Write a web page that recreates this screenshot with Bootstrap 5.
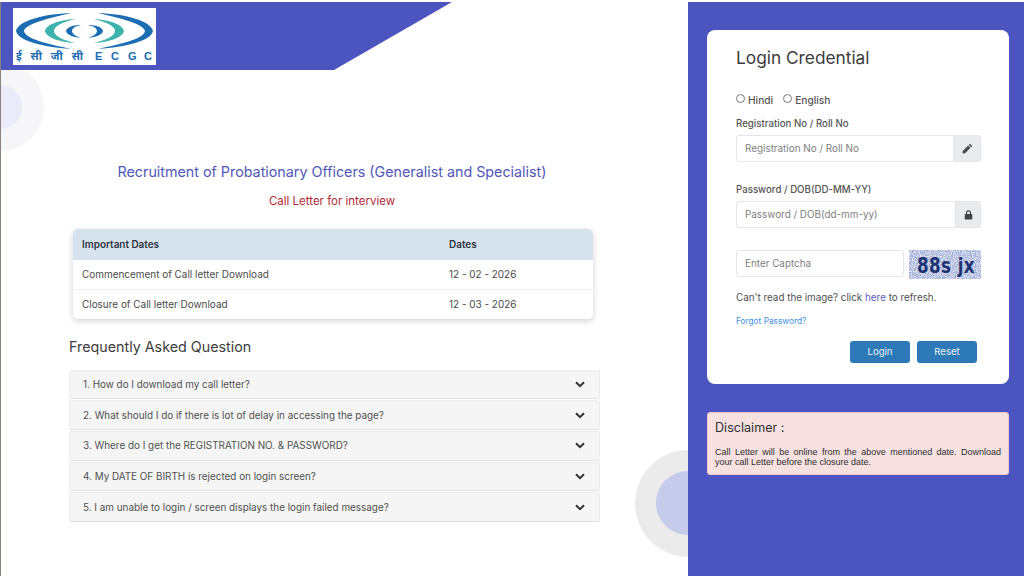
<!DOCTYPE html>
<html lang="en">
<head>
<meta charset="utf-8">
<title>Call Letter Login</title>
<link href="https://cdn.jsdelivr.net/npm/bootstrap@5.3.0/dist/css/bootstrap.min.css" rel="stylesheet">
<style>
html,body{height:100%;}
body{font-family:"Inter","Liberation Sans",sans-serif;color:#444;background:#fff;overflow:hidden;}
.shell{height:576px;padding-top:2px;}
.left-pane{width:688px;flex:none;position:relative;overflow:hidden;border-left:1px solid #8f827c;}
.right-pane{flex:1;background:#4c55bf;padding:28px 15px 0 19px;position:relative;}
.banner{position:relative;z-index:1;width:451px;height:68px;background:#4c55bf;clip-path:polygon(0 0,100% 0,333px 100%,0 100%);padding:6px 0 0 12px;}
.logo-box{width:143px;height:57px;background:#fff;display:block;}
.ring{position:absolute;border-radius:50%;}
.ring-a{width:88px;height:88px;left:-45px;top:61px;background:#f6f6f9;}
.ring-b{width:44px;height:44px;left:-23px;top:83px;background:#e9ebf8;}
.ring-c{width:107px;height:107px;left:634px;top:448px;background:#ebebeb;}
.ring-d{width:64px;height:64px;left:655px;top:469px;background:#c6cbeb;}
.main-col{position:relative;z-index:1;padding:93px 87px 0 68px;}
.page-title{font-size:14.3px;font-weight:400;color:#5058bb;text-align:center;line-height:18px;margin:0 6px 0 0;}
.page-sub{font-size:11.5px;color:#b02a37;text-align:center;line-height:14px;margin:13px 6px 0 0;}
.dates-wrap{margin:21px 8px 0 4px;border-radius:5px;overflow:hidden;box-shadow:0 2px 6px rgba(0,0,0,.18);background:#fff;}
.dates-table{margin:0;font-size:9.95px;--bs-table-color:#4a4a4a;}
.dates-table th{background:#d6e3ee;color:#2f3540;font-weight:600;height:31px;padding:0 9px;vertical-align:middle;border:0;}
.dates-table td{height:29.5px;padding:0 9px;vertical-align:middle;border-color:#efefef;}
.dates-table tr:last-child td{border-bottom:0;}
.col-date{width:153px;}
.faq-title{font-size:14.3px;font-weight:400;color:#3d3d3d;line-height:18px;margin:18.5px 0 14px;}
.faq-list{margin-right:1px;background:none;}
.faq-item{background:#f5f5f5;border:1px solid #ececec;border-bottom-color:#e0e0e0;border-radius:2px;margin-bottom:1px;}
.faq-btn{display:flex;align-items:center;justify-content:space-between;width:100%;height:27.7px;padding:0 14px 0 13px;font-size:9.88px;color:#505050;background:none;border:0;text-align:left;}
.login-card{border:0;border-radius:8px;height:354px;background:#fff;padding:18px 28px 0 29px;}
.login-title{font-size:17.3px;font-weight:400;color:#3c3c3c;line-height:20px;margin:0;}
.lang-row{display:flex;gap:10px;font-size:10.2px;font-weight:500;color:#555;margin-top:25.5px;line-height:13px;}
.lang-row label{display:flex;align-items:center;gap:3px;}
.lang-row input{width:9px;height:9px;margin:0 0 3px;border:1px solid #777;background:#fff;appearance:none;border-radius:50%;}
.field-label{display:block;font-size:9.7px;font-weight:500;color:#555;line-height:12px;margin:11.5px 0 5px;}
.field-group{height:27px;flex-wrap:nowrap;}
.field-group .form-control{font-size:9.9px;padding:0 8px 1.5px;height:27px;border-color:#e6e6e6;border-radius:3px 0 0 3px;box-shadow:none;}
.form-control::placeholder{color:#808080;}
.field-group .input-group-text{background:#e9ebee;border-color:#e6e6e6;padding:0;justify-content:center;border-radius:0 3px 3px 0;}
.field-label.second-label{margin-top:22px;}
.addon-wide{width:28px;}
.addon-narrow{width:26px;}
.captcha-row{display:flex;gap:5px;align-items:flex-start;margin-top:22px;}
.captcha-input{width:168px;flex:none;height:27px;font-size:9.9px;padding:0 8px 1.5px;border-color:#e6e6e6;border-radius:3px;}
.captcha-img{width:72px;height:29px;display:block;flex:none;}
.refresh-line{font-size:9.85px;color:#505050;line-height:13px;margin:12px 0 0;}
.refresh-line a{color:#5a5cb8;text-decoration:none;}
.forgot-link{display:block;font-size:8.3px;color:#3f8fe8;text-decoration:none;line-height:11px;margin-top:12px;}
.action-row{display:flex;gap:7px;justify-content:flex-end;margin:14px 4px 0 0;}
.action-btn{width:60px;height:22px;padding:0;font-size:9.6px;line-height:22px;background:#2e7ab8;border:0;border-radius:3px;color:#e8f1f8;}
.disclaimer-box{margin-top:28px;height:63px;background:#f6e0e0;border:1px solid #f3c9ce;border-radius:3px;padding:7px 7px 0 7px;color:#2e2e2e;}
.disclaimer-head{font-size:12.6px;font-weight:400;line-height:16px;margin:0 0 11px;color:#333;}
.disclaimer-text{font-family:"Liberation Sans",Arial,sans-serif;font-size:9px;line-height:10.2px;margin:0;text-align:justify;}
</style>
</head>
<body>
<div class="shell d-flex">
  <div class="left-pane">
    <span class="ring ring-a"></span><span class="ring ring-b"></span>
    <span class="ring ring-c"></span><span class="ring ring-d"></span>
    <div class="banner">
      <svg class="logo-box" viewBox="0 0 143 57" aria-label="ECGC logo">
        <rect width="143" height="57" fill="#fff"/>
        <path d="M58 5C30 6 5 13 3 23C5 33 30 39 58 41C36 36 12 31 11 23C12 16 36 10 58 5Z" fill="#1c6db2"/>
        <path d="M85 5C113 6 138 13 140 23C138 33 113 39 85 41C107 36 131 31 132 23C131 16 107 10 85 5Z" fill="#1c6db2"/>
        <path d="M62 11C45 12 33 17 32 23C33 29 45 34 62 35C50 32 41 28 41 23C41 18 50 14 62 11Z" fill="#3eb3ad"/>
        <path d="M81 11C98 12 110 17 111 23C110 29 98 34 81 35C93 32 102 28 102 23C102 18 93 14 81 11Z" fill="#3eb3ad"/>
        <path d="M68 17C60 17 54 19 53 23C54 27 60 29 68 30C63 28 59 26 59 23C59 20 63 18 68 17Z" fill="#1c6db2"/>
        <path d="M75 17C83 17 89 19 90 23C89 27 83 29 75 30C80 28 84 26 84 23C84 20 80 18 75 17Z" fill="#1c6db2"/>
        <text x="3" y="52" font-family="'Noto Sans','DejaVu Sans',sans-serif" font-size="11" font-weight="700" fill="#1c6db2" textLength="67" lengthAdjust="spacing">ई सी जी सी</text>
        <text x="82 98 115 131" y="52" font-family="'Liberation Sans',sans-serif" font-size="11" font-weight="700" fill="#1c6db2">ECGC</text>
      </svg>
    </div>
    <div class="main-col">
      <h1 class="page-title">Recruitment of Probationary Officers (Generalist and Specialist)</h1>
      <p class="page-sub">Call Letter for interview</p>
      <div class="dates-wrap">
        <table class="table dates-table">
          <thead><tr><th>Important Dates</th><th class="col-date">Dates</th></tr></thead>
          <tbody>
            <tr><td>Commencement of Call letter Download</td><td>12 - 02 - 2026</td></tr>
            <tr><td>Closure of Call letter Download</td><td>12 - 03 - 2026</td></tr>
          </tbody>
        </table>
      </div>
      <h2 class="faq-title">Frequently Asked Question</h2>
      <div class="accordion faq-list">
        <div class="faq-item"><button class="faq-btn" type="button"><span>1. How do I download my call letter?</span><svg width="10" height="7" viewBox="0 0 10 7"><path d="M1 1.2L5 5.2L9 1.2" fill="none" stroke="#333" stroke-width="2"/></svg></button></div>
        <div class="faq-item"><button class="faq-btn" type="button"><span>2. What should I do if there is lot of delay in accessing the page?</span><svg width="10" height="7" viewBox="0 0 10 7"><path d="M1 1.2L5 5.2L9 1.2" fill="none" stroke="#333" stroke-width="2"/></svg></button></div>
        <div class="faq-item"><button class="faq-btn" type="button"><span>3. Where do I get the REGISTRATION NO. &amp; PASSWORD?</span><svg width="10" height="7" viewBox="0 0 10 7"><path d="M1 1.2L5 5.2L9 1.2" fill="none" stroke="#333" stroke-width="2"/></svg></button></div>
        <div class="faq-item"><button class="faq-btn" type="button"><span>4. My DATE OF BIRTH is rejected on login screen?</span><svg width="10" height="7" viewBox="0 0 10 7"><path d="M1 1.2L5 5.2L9 1.2" fill="none" stroke="#333" stroke-width="2"/></svg></button></div>
        <div class="faq-item"><button class="faq-btn" type="button"><span>5. I am unable to login / screen displays the login failed message?</span><svg width="10" height="7" viewBox="0 0 10 7"><path d="M1 1.2L5 5.2L9 1.2" fill="none" stroke="#333" stroke-width="2"/></svg></button></div>
      </div>
    </div>
  </div>
  <div class="right-pane">
    <div class="card login-card">
      <h2 class="login-title">Login Credential</h2>
      <div class="lang-row">
        <label><input type="radio" name="lang"><span>Hindi</span></label>
        <label><input type="radio" name="lang"><span>English</span></label>
      </div>
      <label class="field-label">Registration No / Roll No</label>
      <div class="input-group field-group">
        <input class="form-control" type="text" placeholder="Registration No / Roll No">
        <span class="input-group-text addon-wide"><svg width="11" height="11" viewBox="0 0 12 12"><path d="M8.6 .8L11.2 3.4L10 4.6L7.4 2ZM6.7 2.7L9.3 5.3L3.4 11.2L.6 11.4L.8 8.6Z" fill="#4a4a4a"/></svg></span>
      </div>
      <label class="field-label second-label">Password / DOB(DD-MM-YY)</label>
      <div class="input-group field-group">
        <input class="form-control" type="password" placeholder="Password / DOB(dd-mm-yy)">
        <span class="input-group-text addon-narrow"><svg width="9" height="10" viewBox="0 0 9 10"><path d="M2.5 4V2.8A2 2 0 0 1 6.5 2.8V4" fill="none" stroke="#444" stroke-width="1.2"/><rect x=".7" y="4" width="7.6" height="5.6" rx=".8" fill="#444"/></svg></span>
      </div>
      <div class="captcha-row">
        <input class="form-control captcha-input" type="text" placeholder="Enter Captcha">
        <svg class="captcha-img" viewBox="0 0 72 29" role="img" aria-label="Captcha">
          <defs><filter id="nz" x="0" y="0" width="100%" height="100%"><feTurbulence type="fractalNoise" baseFrequency=".8" numOctaves="2" seed="4"/><feColorMatrix values="0 0 0 0 .34  0 0 0 0 .42  0 0 0 0 .68  3 0 0 0 -.95"/></filter></defs>
          <rect width="72" height="29" fill="#e4e8f2"/>
          <rect width="72" height="29" filter="url(#nz)"/>
          <text transform="scale(.8 1)" x="10" y="23" font-family="'DejaVu Sans',sans-serif" font-size="21" font-weight="700" fill="#1f3272" textLength="72" lengthAdjust="spacing">88s jx</text>
        </svg>
      </div>
      <p class="refresh-line">Can't read the image? click <a href="#">here</a> to refresh.</p>
      <a class="forgot-link" href="#">Forgot Password?</a>
      <div class="action-row">
        <button class="btn action-btn" type="button">Login</button>
        <button class="btn action-btn" type="button">Reset</button>
      </div>
    </div>
    <div class="disclaimer-box">
      <h3 class="disclaimer-head">Disclaimer :</h3>
      <p class="disclaimer-text">Call Letter will be online from the above mentioned date. Download your call Letter before the closure date.</p>
    </div>
  </div>
</div>
<script src="https://cdn.jsdelivr.net/npm/bootstrap@5.3.0/dist/js/bootstrap.bundle.min.js"></script>
</body>
</html>
